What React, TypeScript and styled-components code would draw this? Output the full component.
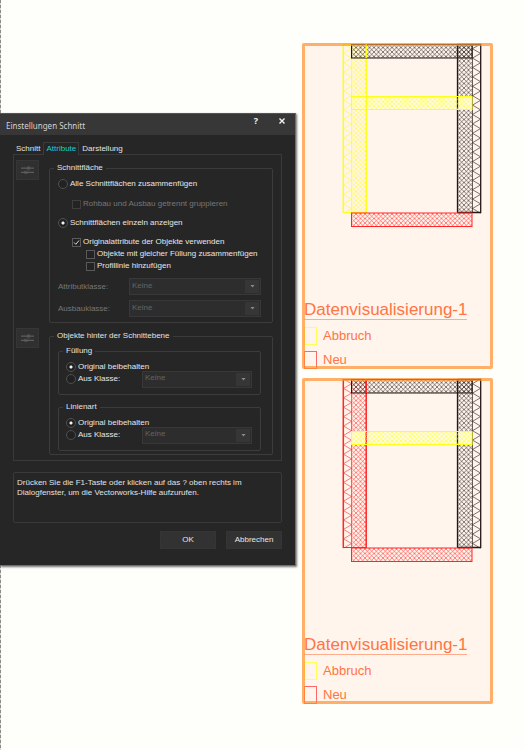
import React, { useId } from "react";
import styled, { createGlobalStyle } from "styled-components";

const GlobalStyle = createGlobalStyle`
  *, *::before, *::after { box-sizing: border-box; }
  body {
    margin: 0;
    background: #fefefa;
    font-family: "Liberation Sans", Arial, sans-serif;
  }
`;

const Workspace = styled.main`
  position: relative;
  display: grid;
  grid-template-columns: minmax(0, 296fr) minmax(0, 191fr);
  column-gap: 6px;
  align-items: start;
  min-height: 100vh;
  padding: 43px 32px 46px 0;

  &::before {
    content: "";
    position: absolute;
    inset: 0 auto 0 0;
    width: 1px;
    background: repeating-linear-gradient(#8b8b88 0 3px, #d8d8d4 3px 5px);
  }
`;

const Dialog = styled.section`
  position: relative;
  margin-top: 70px;
  border-top: 1px solid #555;
  border-right: 1px solid #6e6e6e;
  border-bottom: 1px solid #6e6e6e;
  background: #262626;
  color: #e2e2e2;
  font-size: 8px;
  line-height: 10px;
  box-shadow: 1px 1px 2px rgba(0, 0, 0, 0.55);
`;

const TitleBar = styled.header`
  display: flex;
  align-items: flex-start;
  height: 21px;
  padding: 1px 7px 0 6px;
  background: #373737;
`;

const Title = styled.h1`
  flex: 1;
  margin: 5px 0 0;
  color: #d2d2d2;
  font: 400 8px/12px "Noto Sans", sans-serif;
`;

const TitleButton = styled.button`
  width: 12px;
  height: 12px;
  margin-left: 14px;
  padding: 0;
  border: 0;
  background: none;
  color: #f2f2f2;
  font: 700 9px/12px "Noto Sans", sans-serif;

  svg { display: block; margin: 3px auto; }
`;

const DialogBody = styled.div`
  padding: 7px 13px 16px;
`;

const TabList = styled.div`
  display: flex;
  align-items: flex-end;
`;

const Tab = styled.button<{ $active?: boolean }>`
  height: ${(p) => (p.$active ? "13px" : "12px")};
  margin-bottom: ${(p) => (p.$active ? "-1px" : "0")};
  padding: 0 2px;
  border: 1px solid ${(p) => (p.$active ? "#3a3a3a" : "transparent")};
  border-bottom: 0;
  background: #262626;
  color: ${(p) => (p.$active ? "#12d3cf" : "#e2e2e2")};
  font: 8px/12px "Liberation Sans", Arial, sans-serif;
  white-space: nowrap;
`;

const TabPanel = styled.div`
  display: grid;
  gap: 5px;
  padding: 5px 8px 5px 2px;
  border: 1px solid #3a3a3a;
`;

const PanelRow = styled.div`
  display: grid;
  grid-template-columns: 23px minmax(0, 1fr);
  column-gap: 10px;
  align-items: start;
`;

const IconButton = styled.button`
  display: grid;
  place-items: center;
  height: 20px;
  padding: 0;
  border: 1px solid #363636;
  background: #303030;
`;

const Group = styled.fieldset<{ $inner?: boolean }>`
  min-width: 0;
  margin: ${(p) => (p.$inner ? "0" : "3px 0 0")};
  padding: ${(p) => (p.$inner ? "5px 8px 9px 7px" : "5px 11px 3px 8px")};
  border: 1px solid #3c3c3c;
  border-radius: 2px;
`;

const GroupTitle = styled.legend<{ $inner?: boolean }>`
  height: 10px;
  margin-left: ${(p) => (p.$inner ? "-3px" : "-4px")};
  padding: 0 3px;
  line-height: 10px;
`;

const Options = styled.div<{ $gap: number; $top?: number; $bottom?: number }>`
  display: grid;
  gap: ${(p) => p.$gap}px;
  padding: ${(p) => p.$top ?? 0}px 0 ${(p) => p.$bottom ?? 0}px;
`;

const Option = styled.label<{ $level?: number; $muted?: boolean }>`
  display: flex;
  align-items: center;
  gap: 2px;
  height: 12px;
  margin-left: ${(p) => (p.$level ?? 0) * 14}px;
  color: ${(p) => (p.$muted ? "#777" : "#e6e6e6")};
  white-space: nowrap;
`;

const Radio = styled.input.attrs({ type: "radio" })`
  appearance: none;
  flex: none;
  width: 10px;
  height: 10px;
  margin: 0;
  border: 1px solid #505050;
  border-radius: 50%;
  background: #222;

  &:checked {
    background: radial-gradient(circle, #f2f2f2 0 1px, #222 2px);
  }
`;

const CheckBox = styled.span`
  display: grid;
  flex: none;

  input {
    grid-area: 1 / 1;
    appearance: none;
    width: 9px;
    height: 9px;
    margin: 0;
    border: 1px solid #5a5a5a;
    background: #232323;
  }
  input:disabled { border-color: #3e3e3e; }
  svg { grid-area: 1 / 1; visibility: hidden; pointer-events: none; }
  input:checked + svg { visibility: visible; }
`;

const Field = styled.div`
  display: grid;
  grid-template-columns: 71px minmax(0, 1fr);
  align-items: center;
  color: #777;
`;

const ClassRow = styled.div`
  display: grid;
  grid-template-columns: 76px minmax(0, 1fr);
  grid-template-rows: 12px;
  align-items: center;
`;

const SelectBox = styled.span`
  display: grid;
  height: 17px;
  border: 1px solid #383838;
  background: #2d2d2d;

  select {
    grid-area: 1 / 1;
    appearance: none;
    min-width: 0;
    padding: 0 16px 2px 2px;
    border: 0;
    background: none;
    color: #646464;
    opacity: 1;
    font: 8px/12px "Liberation Sans", Arial, sans-serif;
  }
`;

const Arrow = styled.span`
  grid-area: 1 / 1;
  justify-self: end;
  display: grid;
  place-items: center;
  width: 14px;
  margin: 1px;
  background: #363636;
  pointer-events: none;
`;

const InnerGroups = styled.div`
  display: grid;
  gap: 7px;
`;

const HelpText = styled.p`
  min-height: 51px;
  margin: 11px 0 8px;
  padding: 5px 3px;
  border: 1px solid #3a3a3a;
  border-radius: 2px;
`;

const Actions = styled.footer`
  display: flex;
  justify-content: flex-end;
  gap: 10px;
`;

const Action = styled.button`
  width: 56px;
  height: 18px;
  padding: 0;
  border: 1px solid #353535;
  background: #323232;
  color: #e6e6e6;
  font: 8px/16px "Liberation Sans", Arial, sans-serif;
`;

const Viewports = styled.div`
  display: grid;
  gap: 9px;
`;

const Frame = styled.figure`
  position: relative;
  margin: 0;
  background: #fff5ed;
  color: #ff7443;

  &::after {
    content: "";
    position: absolute;
    inset: 0;
    border: 3px solid rgba(255, 146, 45, 0.7);
    border-radius: 2px;
    pointer-events: none;
  }
`;

const Plan = styled.svg`
  display: block;
  width: 100%;
  height: auto;
`;

const Caption = styled.figcaption`
  padding: 0 2px;
`;

const CaptionTitle = styled.h2`
  width: max-content;
  margin: 0 0 7px;
  border-bottom: 1px solid #ffab8c;
  font-size: 17px;
  font-weight: 400;
  line-height: 18px;
`;

const Legend = styled.ul`
  display: grid;
  gap: 6px;
  margin: 0;
  padding: 0;
  list-style: none;
`;

const LegendItem = styled.li<{ $color: string }>`
  display: flex;
  align-items: center;
  gap: 6px;
  height: 18px;
  font-size: 13px;
  line-height: 18px;

  &::before {
    content: "";
    width: 13px;
    height: 18px;
    border: 1px solid ${(p) => p.$color};
  }
`;

interface CheckProps {
  label: string;
  level: number;
  checked?: boolean;
  disabled?: boolean;
}

function Check({ label, level, checked, disabled }: CheckProps) {
  return (
    <Option $level={level} $muted={disabled}>
      <CheckBox>
        <input type="checkbox" defaultChecked={checked} disabled={disabled} />
        <svg width="9" height="9" viewBox="0 0 9 9" fill="none" stroke="#d8d8d8">
          <path d="M2 4.5 3.8 6.3 7 2.5" />
        </svg>
      </CheckBox>
      {label}
    </Option>
  );
}

function Select({ id, label }: { id?: string; label?: string }) {
  return (
    <SelectBox>
      <select id={id} aria-label={label} disabled defaultValue="Keine">
        <option>Keine</option>
      </select>
      <Arrow>
        <svg width="5" height="3" viewBox="0 0 5 3"><path d="M.5 0h4L2.5 2.500z" fill="#8c8c8c" /></svg>
      </Arrow>
    </SelectBox>
  );
}

function SelectField({ label }: { label: string }) {
  const id = useId();
  return (
    <Field>
      <label htmlFor={id}>{label}</label>
      <Select id={id} />
    </Field>
  );
}

function SourceGroup({ title }: { title: string }) {
  const name = useId();
  return (
    <Group $inner>
      <GroupTitle $inner>{title}</GroupTitle>
      <Option><Radio name={name} defaultChecked />Original beibehalten</Option>
      <ClassRow>
        <Option><Radio name={name} />Aus Klasse:</Option>
        <Select label={`${title}: Klasse`} />
      </ClassRow>
    </Group>
  );
}

function DataMapButton({ label }: { label: string }) {
  return (
    <IconButton aria-label={label}>
      <svg width="13" height="9" viewBox="0 0 13 9" fill="#5c5c5c">
        <path d="M0 1.600h6V.6l1.500 1V0h1v1.600H13v1.200H8.500v1.600h-1V2.800L6 3.800v-1H0zM0 5.800h3l1.500-1.600v1.600l2-1v1H13V7H6.500v1l-2-1v1.600L3 7H0z" />
      </svg>
    </IconButton>
  );
}

const BLACK = "#231815";
const YELLOW = "#ffff1a";
const RED = "#ff2626";

function zigzag(outer: number, inner: number) {
  let d = `M${outer} 1`;
  for (let i = 0; i < 18; i++) {
    const y = 1 + i * 9.4;
    d += `L${inner} ${(y + 4.7).toFixed(1)}L${outer} ${(y + 9.4).toFixed(1)}`;
  }
  return d;
}

function SectionPlan({ leftWall }: { leftWall: string }) {
  const id = useId();
  const hatch = (name: string, color: string) => (
    <pattern id={id + name} width="4.500" height="4.500" patternUnits="userSpaceOnUse">
      <path d="M0 0 4.500 4.500M4.500 0 0 4.500" stroke={color} strokeWidth=".55" />
    </pattern>
  );
  const fill = (name: string) => `url(#${id}${name})`;
  return (
    <Plan viewBox="0 0 191 258" fill="none" role="img" aria-label="Schnitt">
      <defs>
        {hatch("b", BLACK)}
        {hatch("y", YELLOW)}
        {hatch("r", RED)}
        {hatch("l", leftWall)}
      </defs>
      <path d={zigzag(41.5, 49.5)} stroke={leftWall} strokeWidth=".6" />
      <rect x="49.500" y="1" width="14.500" height="169" fill={fill("l")} />
      <path d="M49.500 1V170" stroke={leftWall} strokeWidth=".7" />
      <path d="M41 1.500H64.500M41 169.500H64.500" stroke={leftWall} />
      <path d="M41.300 1V170M64.200 1V170" stroke={leftWall} strokeWidth="1.500" />
      <rect x="155.500" y="1" width="14.500" height="169" fill={fill("b")} />
      <path d={zigzag(178.500, 170.500)} stroke={BLACK} strokeWidth=".6" />
      <path d="M170.500 1V170" stroke={BLACK} strokeWidth=".7" />
      <path d="M155.500 1.500H179M155.500 169.500H179M155.500 1V170M178.700 1V170" stroke={BLACK} strokeWidth="1.300" />
      <rect x="49.500" y="1.500" width="120.500" height="13.500" fill={fill("b")} stroke={BLACK} />
      <rect x="49.500" y="53.500" width="120.500" height="13" fill="#fffbe0" />
      <path d="M155.500 54V66" stroke={BLACK} strokeWidth="1.300" />
      <path d="M64.200 54V66M64.200 1V15" stroke={leftWall} strokeWidth="1.500" />
      <rect x="49.500" y="53.500" width="120.500" height="13" fill={fill("y")} stroke={YELLOW} />
      <rect x="49.500" y="170" width="120.500" height="13.500" fill={fill("r")} stroke={RED} />
    </Plan>
  );
}

function Viewport({ leftWall }: { leftWall: string }) {
  return (
    <Frame>
      <SectionPlan leftWall={leftWall} />
      <Caption>
        <CaptionTitle>Datenvisualisierung-1</CaptionTitle>
        <Legend>
          <LegendItem $color="#ffff55">Abbruch</LegendItem>
          <LegendItem $color="#ff6868">Neu</LegendItem>
        </Legend>
      </Caption>
    </Frame>
  );
}

function SettingsDialog() {
  return (
    <Dialog role="dialog" aria-label="Einstellungen Schnitt">
      <TitleBar>
        <Title>Einstellungen Schnitt</Title>
        <TitleButton>?</TitleButton>
        <TitleButton aria-label="Schließen">
          <svg width="6" height="6" viewBox="0 0 6 6" stroke="#f2f2f2" strokeWidth="1.400"><path d="M.5.5 5.500 5.500M5.500.5.5 5.500" /></svg>
        </TitleButton>
      </TitleBar>
      <DialogBody>
        <TabList role="tablist">
          <Tab role="tab">Schnitt</Tab>
          <Tab role="tab" aria-selected $active>Attribute</Tab>
          <Tab role="tab">Darstellung</Tab>
        </TabList>
        <TabPanel role="tabpanel">
          <PanelRow>
            <DataMapButton label="Schnittfläche: Datenzuordnung" />
            <Group>
              <GroupTitle>Schnittfläche</GroupTitle>
              <Options $gap={8}>
                <Option><Radio name="area" />Alle Schnittflächen zusammenfügen</Option>
                <Check level={1} label="Rohbau und Ausbau getrennt gruppieren" disabled />
              </Options>
              <Options $gap={7} $top={7}>
                <Option><Radio name="area" defaultChecked />Schnittflächen einzeln anzeigen</Option>
                <Check level={1} label="Originalattribute der Objekte verwenden" checked />
              </Options>
              <Options $gap={0}>
                <Check level={2} label="Objekte mit gleicher Füllung zusammenfügen" />
                <Check level={2} label="Profillinie hinzufügen" />
              </Options>
              <Options $gap={5} $top={6} $bottom={2}>
                <SelectField label="Attributklasse:" />
                <SelectField label="Ausbauklasse:" />
              </Options>
            </Group>
          </PanelRow>
          <PanelRow>
            <DataMapButton label="Objekte: Datenzuordnung" />
            <Group>
              <GroupTitle>Objekte hinter der Schnittebene</GroupTitle>
              <InnerGroups>
                <SourceGroup title="Füllung" />
                <SourceGroup title="Linienart" />
              </InnerGroups>
            </Group>
          </PanelRow>
        </TabPanel>
        <HelpText>
          Drücken Sie die F1-Taste oder klicken auf das ? oben rechts im Dialogfenster, um die Vectorworks-Hilfe aufzurufen.
        </HelpText>
        <Actions>
          <Action>OK</Action>
          <Action>Abbrechen</Action>
        </Actions>
      </DialogBody>
    </Dialog>
  );
}

export default function App() {
  return (
    <>
      <GlobalStyle />
      <Workspace>
        <SettingsDialog />
        <Viewports>
          <Viewport leftWall={YELLOW} />
          <Viewport leftWall={RED} />
        </Viewports>
      </Workspace>
    </>
  );
}
